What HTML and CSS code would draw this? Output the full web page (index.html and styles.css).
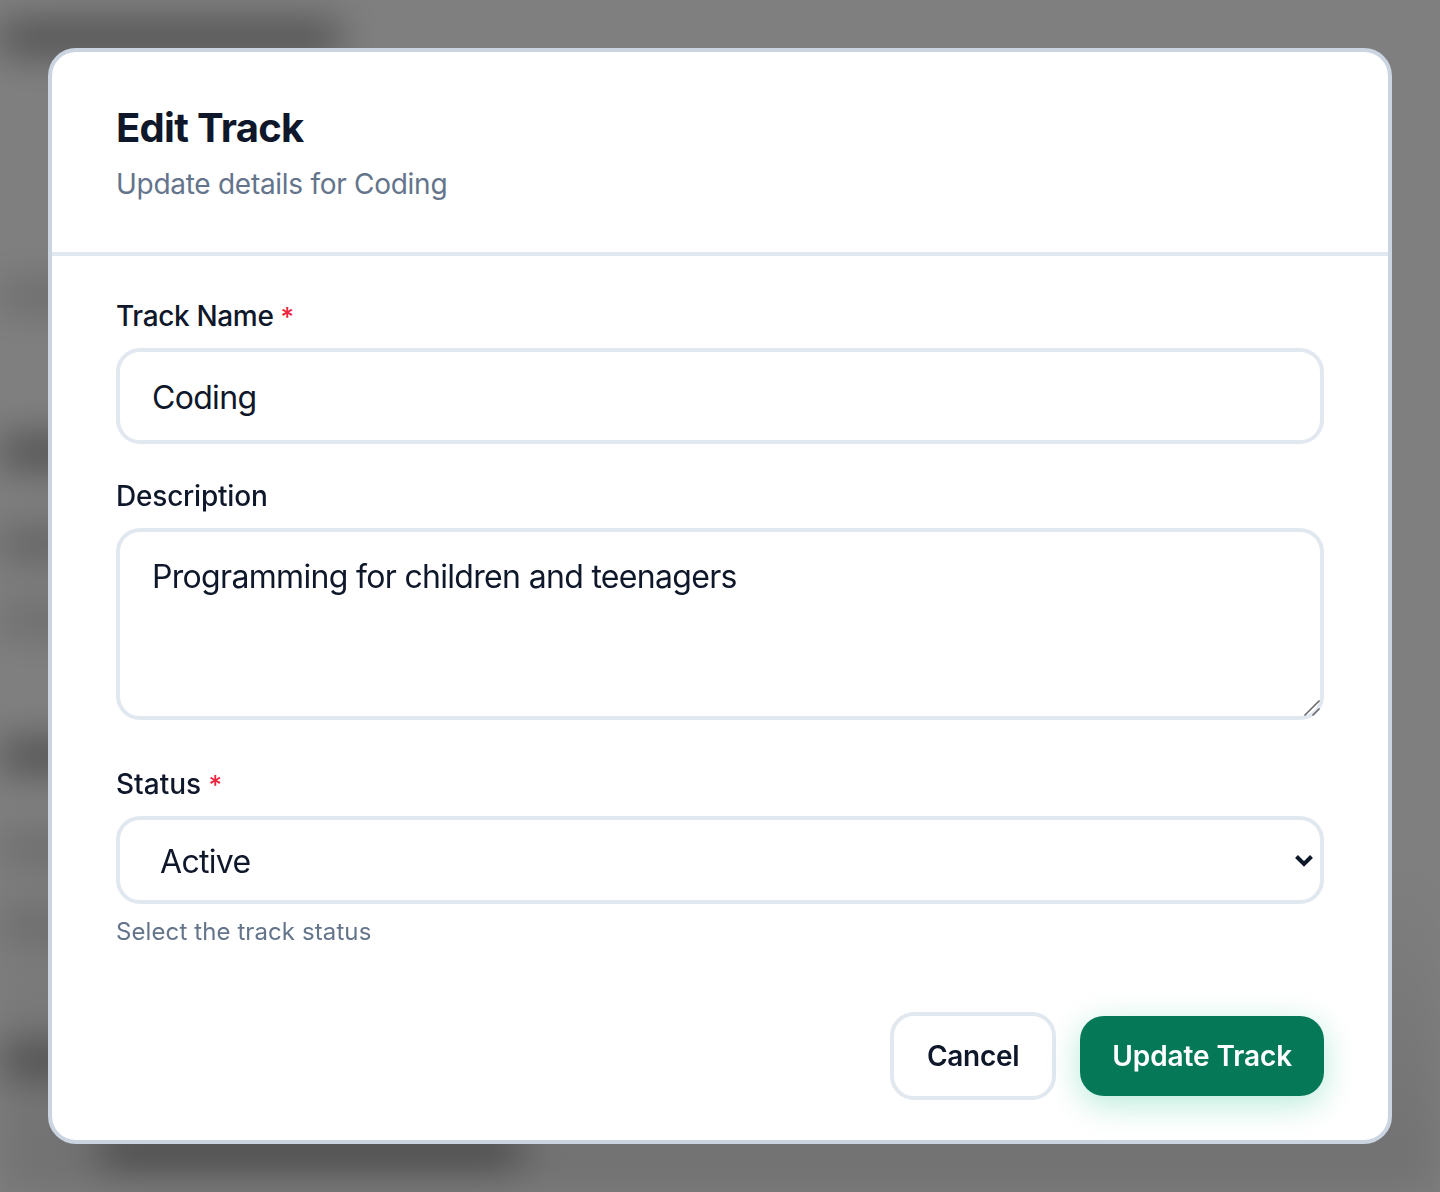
FILE: index.html
```html
<!DOCTYPE html>
<html lang="en">
<head>
    <meta charset="UTF-8">
    <meta name="viewport" content="width=device-width, initial-scale=1.0">
    <title>Edit Track</title>
    <link rel="stylesheet" href="styles.css">
</head>
<body>
    <div class="page-behind">
        <div class="behind-title"></div>
        <div class="behind-row row-faint gap-a"></div>
        <div class="behind-row gap-b"></div>
        <div class="behind-row row-mid gap-c"></div>
        <div class="behind-row row-faint gap-d"></div>
        <div class="behind-row gap-e"></div>
        <div class="behind-row row-faint gap-c"></div>
        <div class="behind-row row-faint gap-f"></div>
        <div class="behind-row gap-g"></div>
        <div class="behind-row row-last"></div>
    </div>

    <div class="overlay">
        <div class="modal-content">
            <div class="modal-header">
                <h2>Edit Track</h2>
                <p>Update details for Coding</p>
            </div>
            <form class="modal-body">
                <div class="field field-name">
                    <label for="trackName">Track Name <span class="required">*</span></label>
                    <input type="text" id="trackName" value="Coding">
                </div>
                <div class="field field-desc">
                    <label for="trackDesc">Description</label>
                    <div class="textarea-wrap">
                        <textarea id="trackDesc">Programming for children and teenagers</textarea>
                        <svg class="grip" width="18" height="18" viewBox="0 0 18 18"><path d="M1.5 16.5 16.5 1.5M9.5 16.5l7-7" stroke="#6b6b6b" stroke-width="1.6" fill="none"/></svg>
                    </div>
                </div>
                <div class="field field-status">
                    <label for="trackStatus">Status <span class="required">*</span></label>
                    <div class="select-wrap">
                        <select id="trackStatus">
                            <option>Active</option>
                            <option>Inactive</option>
                        </select>
                        <svg class="chevron" width="20" height="14" viewBox="0 0 20 14"><path d="M2.5 3.5 10 11l7.5-7.5" stroke="#0f172a" stroke-width="4" fill="none"/></svg>
                    </div>
                    <small>Select the track status</small>
                </div>
                <div class="modal-actions">
                    <button type="button" class="btn-cancel">Cancel</button>
                    <button type="button" class="btn-save">Update Track</button>
                </div>
            </form>
        </div>
    </div>
</body>
</html>
```

FILE: styles.css
```css
* {
    box-sizing: border-box;
}
html, body {
    height: 100%;
}
body {
    margin: 0;
    font-family: Inter, "Liberation Sans", sans-serif;
    color: #0f172a;
    background-color: #fff;
    overflow: hidden;
}

/* the page under the dialog, only seen blurred */
.page-behind {
    height: 100%;
    padding-top: 26px;
    background: linear-gradient(to bottom, #fff 72%, #e2e2e2 100%);
    filter: blur(20px);
}
.behind-title {
    width: 340px;
    height: 24px;
    margin-bottom: 234px;
    background-color: #777;
}
.behind-row {
    width: 120px;
    height: 24px;
    background-color: #777;
}
.row-mid {
    background-color: #aaa;
}
.row-faint {
    background-color: #c8c8c8;
}
.row-last {
    width: 420px;
    margin-left: 100px;
    background-color: #6a6a6a;
}
.gap-a { margin-bottom: 132px; }
.gap-b { margin-bottom: 68px; }
.gap-c { margin-bottom: 52px; }
.gap-d { margin-bottom: 112px; }
.gap-e { margin-bottom: 68px; }
.gap-f { margin-bottom: 112px; }
.gap-g { margin-bottom: 66px; }

.overlay {
    position: fixed;
    left: 0;
    top: 0;
    width: 100%;
    height: 100%;
    padding: 48px;
    background-color: rgba(0, 0, 0, 0.5);
    display: flex;
    justify-content: center;
    align-items: center;
}
.modal-content {
    width: 100%;
    height: 100%;
    background-color: #fff;
    border: 4px solid #cbd5e1;
    border-radius: 28px;
}
.modal-header {
    height: 204px;
    padding: 52px 64px 0;
    border-bottom: 4px solid #e2e8f0;
}
.modal-header h2 {
    margin: 0;
    font-size: 40px;
    line-height: 48px;
    font-weight: 700;
    letter-spacing: -0.7px;
}
.modal-header p {
    margin: 12px 0 0;
    font-size: 28px;
    line-height: 40px;
    letter-spacing: -0.28px;
    color: #64748b;
}
.modal-body {
    padding: 44px 64px 0;
}
.field {
    display: flex;
    flex-direction: column;
}
.field label {
    height: 32px;
    font-size: 28px;
    line-height: 32px;
    font-weight: 500;
    letter-spacing: -0.2px;
    margin-bottom: 16px;
}
.field-name label {
    letter-spacing: -0.35px;
}
.field-status label {
    letter-spacing: 0;
}
.required {
    color: #ef233c;
    font-size: 26px;
    line-height: 1;
}
.field-desc {
    margin-top: 36px;
}
.field-status {
    margin-top: 48px;
}
input[type="text"], textarea, select {
    display: block;
    width: 100%;
    padding: 0 32px;
    font-family: inherit;
    font-size: 32px;
    letter-spacing: -0.68px;
    color: #0f172a;
    background-color: #fff;
    border: 4px solid #e2e8f0;
    border-radius: 24px;
    outline: none;
}
input[type="text"] {
    height: 96px;
    padding-top: 2px;
}
textarea {
    height: 192px;
    padding-top: 25px;
    line-height: 40px;
    resize: none;
}
select {
    height: 88px;
    padding-left: 40px;
    padding-top: 2px;
    appearance: none;
}
.textarea-wrap, .select-wrap {
    position: relative;
}
.grip {
    position: absolute;
    right: 3px;
    bottom: 3px;
}
.chevron {
    position: absolute;
    right: 10px;
    top: 37px;
}
.field small {
    margin-top: 12px;
    font-size: 24px;
    line-height: 32px;
    letter-spacing: 0.1px;
    color: #64748b;
}
.modal-actions {
    display: flex;
    justify-content: flex-end;
    align-items: center;
    gap: 24px;
    margin-top: 64px;
}
.modal-actions button {
    font-family: inherit;
    font-size: 28px;
    font-weight: 600;
    cursor: pointer;
}
.btn-cancel {
    height: 88px;
    padding: 0 33px;
    letter-spacing: -0.3px;
    color: #0f172a;
    background-color: #fff;
    border: 4px solid #e2e8f0;
    border-radius: 24px;
}
.btn-save {
    height: 80px;
    padding: 0 32px;
    letter-spacing: -0.1px;
    color: #fff;
    background-color: #047857;
    border: none;
    border-radius: 24px;
    box-shadow: 0 8px 32px rgba(16, 185, 129, 0.3);
}
```
